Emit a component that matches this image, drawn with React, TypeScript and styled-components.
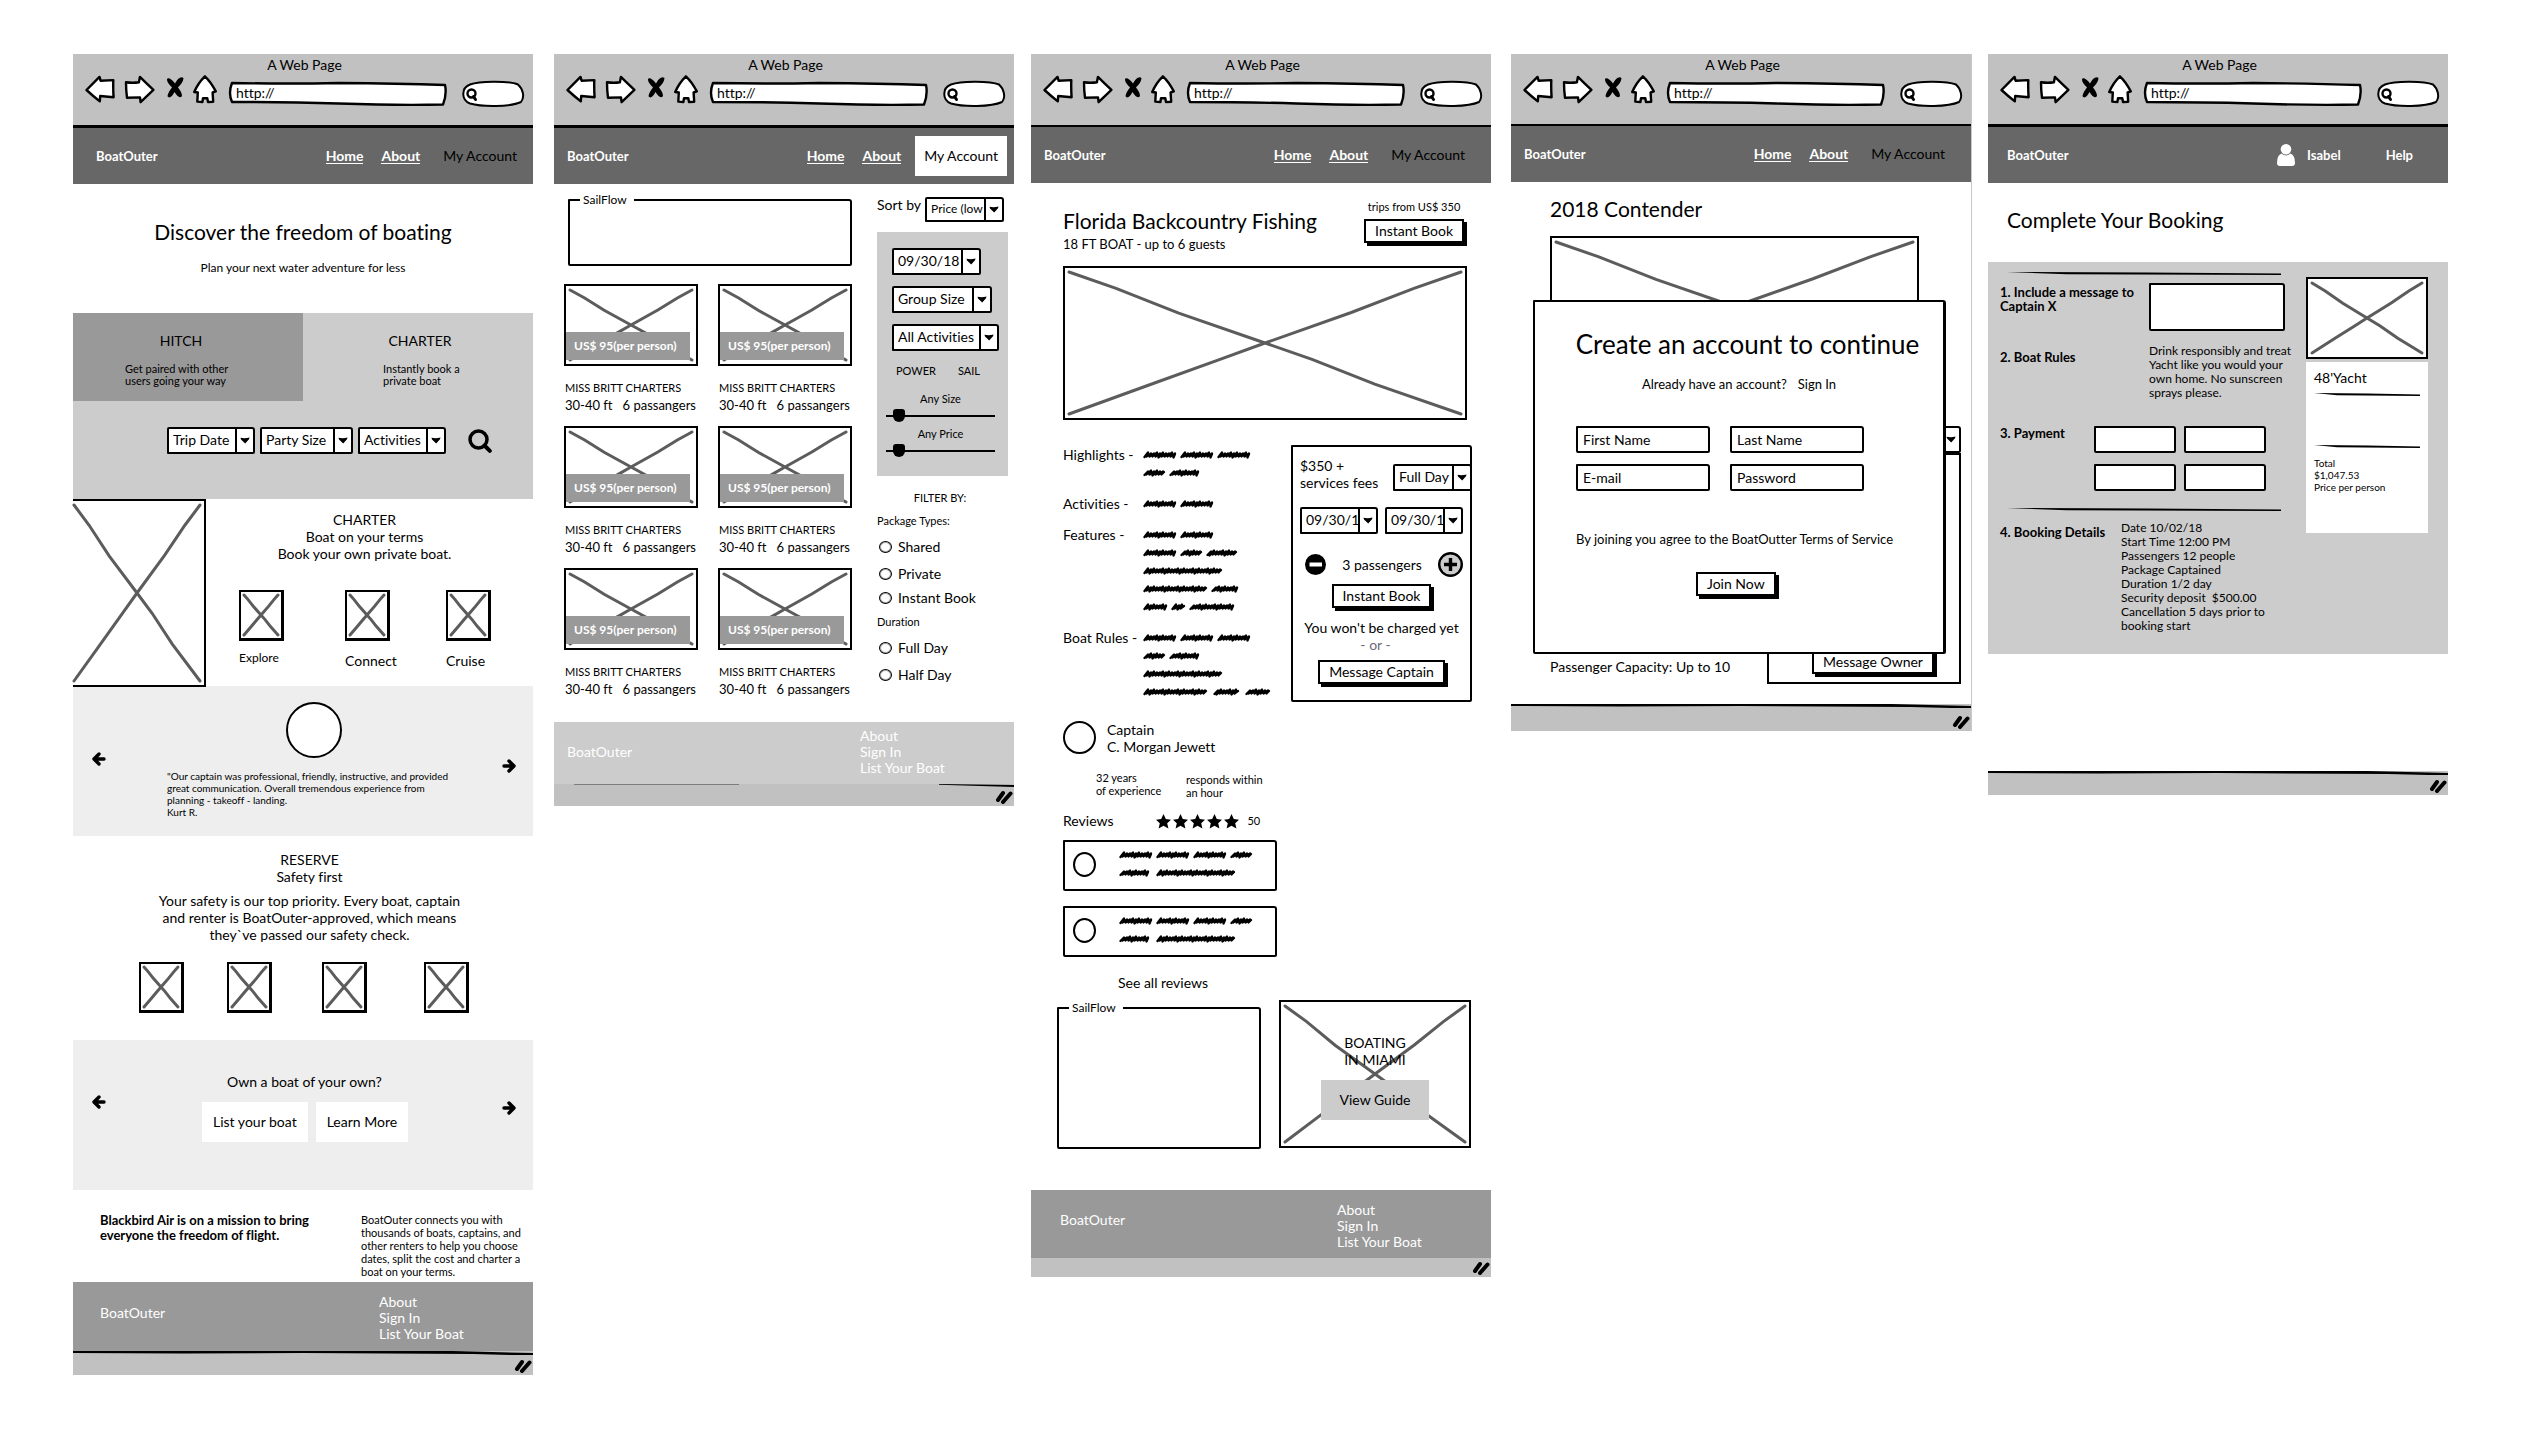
import React from "react";
import styled, { createGlobalStyle, css } from "styled-components";

const INK = "#000";
const DARK = "#676767";
const MID = "#999";
const PANEL = "#ccc";
const PALE = "#eee";
const CHROME = "#c1c1c1";

const GlobalStyle = createGlobalStyle`
  *, *::before, *::after { box-sizing: border-box; }
  body {
    margin: 0;
    background: #fff;
    color: ${INK};
    font-family: Lato, "Open Sans", sans-serif;
    font-size: 14px;
    line-height: 16px;
    font-variant-ligatures: none;
  }
  h1, h2, h3, p, dl, dd, dt, ul, figure, fieldset, blockquote { margin: 0; padding: 0; }
  ul { list-style: none; }
  a { color: inherit; text-decoration: none; }
  button, input, select, textarea { font: inherit; color: inherit; margin: 0; border-radius: 0; }
`;

/* ---------- text ---------- */

const Text = styled.p<{ $size?: number; $lh?: number; $bold?: boolean; $center?: boolean }>`
  font-size: ${(p) => p.$size ?? 14}px;
  line-height: ${(p) => p.$lh ?? 16}px;
  font-weight: ${(p) => (p.$bold ? 700 : 400)};
  text-align: ${(p) => (p.$center ? "center" : "left")};
`;

const Title = styled.h1`
  font-size: 21px;
  line-height: 24px;
  font-weight: 400;
`;

const SmallHeading = styled.h2<{ $lh?: number }>`
  font-size: 14px;
  line-height: ${(p) => p.$lh ?? 16}px;
  font-weight: 400;
`;

/* ---------- page frames ---------- */

const Board = styled.main`
  display: flex;
  align-items: flex-start;
  padding: 54px 79px 0 73px;
`;

const Frame = styled.article<{ $gap?: number; $edge?: boolean }>`
  flex: 1 1 0;
  min-width: 0;
  margin-left: ${(p) => p.$gap ?? 0}px;
  display: flex;
  flex-direction: column;
  background: #fff;
  box-shadow: ${(p) => (p.$edge ? "1px 0 0 #c8c8c8" : "none")};
`;

const ChromeBar = styled.header<{ $line: number; $height: number }>`
  height: ${(p) => p.$height + p.$line}px;
  padding: 3px 9px 0 12px;
  background: ${CHROME};
  border-bottom: ${(p) => p.$line}px solid ${INK};
`;

const ChromeTitle = styled.p`
  text-align: center;
  font-size: 14px;
  line-height: 16px;
`;

const ChromeTools = styled.div`
  display: flex;
  align-items: flex-start;
  margin-top: 2px;
`;

const ToolButton = styled.button<{ $after: number }>`
  display: block;
  flex: none;
  padding: 0;
  border: 0;
  background: none;
  line-height: 0;
  margin-right: ${(p) => p.$after}px;
`;

const AddressField = styled.label`
  position: relative;
  flex: 1;
  height: 23px;
  margin: 7px 15px 0 0;
  min-width: 0;
`;

const PillField = styled.label`
  position: relative;
  flex: none;
  width: 62px;
  height: 25px;
  margin-top: 6px;
`;

const FieldArt = styled.svg`
  position: absolute;
  inset: 0;
  width: 100%;
  height: 100%;
  overflow: visible;
`;

const BareInput = styled.input<{ $indent: number }>`
  position: relative;
  display: block;
  width: 100%;
  height: 21px;
  border: 0;
  background: none;
  padding: 0 4px 0 ${(p) => p.$indent}px;
  outline: none;
`;

const stroke = { stroke: INK, strokeWidth: 2.4, strokeLinejoin: "round" as const, strokeLinecap: "round" as const };

function Chrome({ line = 3, height = 71 }: { line?: number; height?: number }) {
  return (
    <ChromeBar $line={line} $height={height}>
      <ChromeTitle>A Web Page</ChromeTitle>
      <ChromeTools>
        <ToolButton $after={9} aria-label="Back">
          <svg width="30" height="28" fill="#fff" {...stroke}>
            <path d="M1.5 15 14.5 1.9 15.6 5.7 28.3 5.1Q28 14 28.6 22.2L15.2 21 14.8 26.4Q8 21 1.5 15Z" />
          </svg>
        </ToolButton>
        <ToolButton $after={11} aria-label="Forward">
          <svg width="31" height="29" fill="#fff" {...stroke}>
            <path d="M2 7.2Q9 8.2 14.9 7.2L15.9 1.9Q22 8 29.4 14.8L16.6 27.2 16 22.4 3 22.8Q2 15 2 7.2Z" />
          </svg>
        </ToolButton>
        <ToolButton $after={9} aria-label="Stop">
          <svg width="18" height="26" fill={INK}>
            <path d="M1 4C2 2 6 4 9 8.500 12 3 15 1 17.500 3 17 8 14 10 12 12.500 14 15 16 18 16 21 14 24 11 21 8.500 17 6 22 3 24 1.500 21 2 18 4 15 6 12.500 4 10 1 8 1 4Z" />
          </svg>
        </ToolButton>
        <ToolButton $after={12} aria-label="Home">
          <svg width="24" height="29" fill="#fff" {...stroke}>
            <path d="M11.900 1.300Q18 7 22.800 16.400L19.600 17.500 20.200 26.800 15 27 14.300 23.300 10 23.300 9.400 27 4.300 26.600 4.800 17.500 1.200 17Q5 8 11.900 1.300Z" />
          </svg>
        </ToolButton>
        <AddressField>
          <FieldArt viewBox="0 0 219 23" preserveAspectRatio="none" fill="#fff" {...stroke}>
            <path d="M3 1Q60 2 110 1 170 1.500 217 3 219 12 215 22.500 170 23.500 110 21.500 60 20 3 20-1 11 3 1Z" />
          </FieldArt>
          <BareInput $indent={7} aria-label="Address" defaultValue="http://" />
        </AddressField>
        <PillField>
          <FieldArt viewBox="0 0 62 25" fill="#fff" {...stroke} strokeWidth={2}>
            <path d="M8 3.500C18-.5 48 0 56 3.500 61 8 63 16 59 21 48 26 20 26 8 22.500-1 19-1 7 8 3.500Z" />
            <circle cx="9.500" cy="12.500" r="4" strokeWidth={2.400} />
            <path d="M11.500 15.500 13.500 18.500" strokeWidth={3} />
          </FieldArt>
          <BareInput $indent={16} aria-label="Search" />
        </PillField>
      </ChromeTools>
    </ChromeBar>
  );
}

const NavBar = styled.nav<{ $left: number; $right: number }>`
  display: flex;
  align-items: center;
  height: 56px;
  padding: 0 ${(p) => p.$right}px 0 ${(p) => p.$left}px;
  background: ${DARK};
  color: #fff;
`;

const Brand = styled.a`
  margin-right: auto;
  font-size: 13px;
  font-weight: 700;
`;

const NavLink = styled.a<{ $after?: number }>`
  font-size: 14px;
  font-weight: 700;
  line-height: 15px;
  border-bottom: 1px solid #fff;
  margin-right: ${(p) => p.$after ?? 0}px;
`;

const AccountLink = styled.a<{ $boxed?: boolean }>`
  font-size: 14px;
  color: ${INK};
  ${(p) =>
    p.$boxed &&
    css`
      display: flex;
      align-items: center;
      height: 40px;
      padding: 0 9px;
      margin-left: -9px;
      background: #fff;
    `}
`;

function SiteNav({ left, right, boxed }: { left: number; right: number; boxed?: boolean }) {
  return (
    <NavBar $left={left} $right={right}>
      <Brand href="#home">BoatOuter</Brand>
      <NavLink href="#home" $after={18}>Home</NavLink>
      <NavLink href="#about" $after={23}>About</NavLink>
      <AccountLink href="#account" $boxed={boxed}>My Account</AccountLink>
    </NavBar>
  );
}

const UserNavLink = styled.a<{ $after?: number }>`
  display: flex;
  align-items: center;
  gap: 12px;
  font-size: 13px;
  font-weight: 700;
  margin-right: ${(p) => p.$after ?? 0}px;
`;

const FooterBar = styled.footer<{ $tone: string; $height: number; $left: number }>`
  display: grid;
  grid-template-columns: 1fr 154px;
  align-items: start;
  height: ${(p) => p.$height}px;
  padding-left: ${(p) => p.$left}px;
  background: ${(p) => p.$tone};
  color: #fff;
`;

const FooterBrand = styled.a<{ $top: number }>`
  margin-top: ${(p) => p.$top}px;
`;

const FooterLinks = styled.ul<{ $top: number }>`
  margin-top: ${(p) => p.$top}px;
`;

function SiteFooter({ tone = MID, height, left, top }: { tone?: string; height: number; left: number; top: [number, number] }) {
  return (
    <FooterBar $tone={tone} $height={height} $left={left}>
      <FooterBrand href="#home" $top={top[0]}>BoatOuter</FooterBrand>
      <FooterLinks $top={top[1]}>
        <li><a href="#about">About</a></li>
        <li><a href="#signin">Sign In</a></li>
        <li><a href="#list">List Your Boat</a></li>
      </FooterLinks>
    </FooterBar>
  );
}

const StatusBarBox = styled.div<{ $height: number }>`
  position: relative;
  display: flex;
  justify-content: flex-end;
  align-items: flex-end;
  height: ${(p) => p.$height}px;
  padding: 0 1px 2px 0;
  background: ${CHROME};
`;

const StatusLine = styled.svg`
  position: absolute;
  left: 0;
  top: 0;
  width: 100%;
  height: 4px;
`;

function StatusBar({ height, line }: { height: number; line: "full" | "faint" | "none" }) {
  return (
    <StatusBarBox $height={height}>
      {line === "full" && (
        <StatusLine viewBox="0 0 460 4" preserveAspectRatio="none">
          <path d="M0 0H380L460 2V4.500L400 3 230 2 110 2.600 0 2Z" fill={INK} />
        </StatusLine>
      )}
      {line === "faint" && (
        <StatusLine viewBox="0 0 460 4" preserveAspectRatio="none">
          <path d="M20 0H185V.8H20Z" fill="#666" />
          <path d="M385 0 460 1V3L385 .8Z" fill={INK} />
        </StatusLine>
      )}
      <svg width="18" height="14" stroke={INK} strokeWidth="4" strokeLinecap="round">
        <path d="M3 10 8 3M8 12 15.500 3.500" />
      </svg>
    </StatusBarBox>
  );
}

/* ---------- sketch parts ---------- */

const PictureBox = styled.div<{ $w?: string; $h: number; $cut?: boolean; $heavy?: boolean }>`
  position: relative;
  flex: none;
  width: ${(p) => p.$w ?? "100%"};
  height: ${(p) => p.$h}px;
  padding: 4px;
  background: #fff;
  border: 2px solid ${INK};
  ${(p) => p.$heavy && css`border-right-width: 3px; border-bottom-width: 3px; padding: 3px;`}
  ${(p) => p.$cut && css`border-left: 0; padding-left: 1px;`}
`;

const Cross = styled.svg`
  display: block;
  width: 100%;
  height: 100%;
  overflow: visible;
`;

function Picture({ children, ...box }: { $w?: string; $h: number; $cut?: boolean; $heavy?: boolean; children?: React.ReactNode }) {
  return (
    <PictureBox {...box}>
      <Cross viewBox="0 0 100 100" preserveAspectRatio="none" fill="none" stroke="#5c5c5c" strokeWidth="3" strokeLinecap="round" aria-hidden="true">
        <path vectorEffect="non-scaling-stroke" d="M0 0 12 11.500 28 29 50 50 62 61.500 78 79 100 100M100 0 88 11.500 72 28.500 50 50 38 62 22 78 0 100" />
      </Cross>
      {children}
    </PictureBox>
  );
}

const SelectBox = styled.label<{ $w: number; $small?: boolean }>`
  display: flex;
  flex: none;
  width: ${(p) => p.$w}px;
  height: ${(p) => (p.$small ? 25 : 27)}px;
  background: #fff;
  border: 2px solid ${INK};
  border-radius: 2px 3px 2px 1px;
  font-size: ${(p) => (p.$small ? 12 : 14)}px;
`;

const BareSelect = styled.select`
  appearance: none;
  flex: 1;
  min-width: 0;
  border: 0;
  padding: 0 0 1px 4px;
  background: none;
  overflow: hidden;
  text-overflow: clip;
  outline: none;
`;

const ArrowCell = styled.span`
  flex: none;
  display: flex;
  align-items: center;
  justify-content: center;
  width: 18px;
  border-left: 2px solid ${INK};
`;

function Select({ label, w, small }: { label: string; w: number; small?: boolean }) {
  return (
    <SelectBox $w={w} $small={small}>
      <BareSelect aria-label={label}>
        <option>{label}</option>
      </BareSelect>
      <ArrowCell>
        <svg width="10" height="7"><path d="M.5.8Q5 1.600 9.500.6L9 2.200 5.200 6.500 1 2.400Z" fill={INK} /></svg>
      </ArrowCell>
    </SelectBox>
  );
}

const SketchButton = styled.button`
  display: block;
  height: 24px;
  padding: 0 9px 1px;
  background: #fff;
  border: 2px solid ${INK};
  box-shadow: 3px 3px 0 ${INK};
  white-space: nowrap;
`;

const FlatButton = styled.button<{ $tone?: string; $pad: number }>`
  height: 40px;
  padding: 0 ${(p) => p.$pad}px;
  border: 0;
  background: ${(p) => p.$tone ?? "#fff"};
  white-space: nowrap;
`;

const SketchInput = styled.input`
  width: 100%;
  min-width: 0;
  height: 27px;
  padding: 0 5px 1px;
  background: #fff;
  border: 2px solid ${INK};
  border-radius: 1px 3px 2px 2px;
  outline: none;
  &::placeholder { color: ${INK}; opacity: 1; }
`;

const ForecastBox = styled.fieldset<{ $h: number }>`
  min-width: 0;
  height: ${(p) => p.$h}px;
  border: 2px solid ${INK};
  border-radius: 1px 3px 2px 2px;
`;

const ForecastLegend = styled.legend`
  margin-left: 10px;
  padding: 0 7px 0 3px;
  font-size: 12px;
  line-height: 16px;
`;

const Avatar = styled.div<{ $w: number; $h: number }>`
  flex: none;
  width: ${(p) => p.$w}px;
  height: ${(p) => p.$h}px;
  background: #fff;
  border: 2px solid ${INK};
  border-radius: 50%;
`;

const PenLine = styled.svg`
  display: block;
  width: 100%;
  height: 3px;
`;

function Rule() {
  return (
    <PenLine viewBox="0 0 275 3" preserveAspectRatio="none" aria-hidden="true">
      <path d="M0 0 140 .4 275 1.600V3L60 2.200Z" fill={INK} />
    </PenLine>
  );
}

const ScribbleRow = styled.svg`
  display: block;
  height: 18px;
`;

/* Pen strokes that stand in for words; each number is one word's length. */
function Scribble({ words, space = 4 }: { words: number[]; space?: number }) {
  let x = 0;
  const parts: string[] = [];
  words.forEach((w) => {
    const end = x + w;
    let d = `M${x + 1.5} 11`;
    let i = 0;
    for (let p = x + 1; p <= end - 5; p += 3) {
      const beat = (i * 7 + w) % 5;
      d += `L${p + 4} ${beat > 2 ? 6.5 : 7.5}L${p + 2.5} ${beat === 1 ? 11.5 : 10.5}`;
      i += 1;
    }
    d += `L${end - 1} 8`;
    parts.push(d);
    x += w + space;
  });
  return (
    <ScribbleRow width={x} height="18" fill="none" stroke={INK} strokeWidth="2.300" strokeLinecap="round" strokeLinejoin="round" aria-hidden="true">
      <path d={parts.join("")} />
    </ScribbleRow>
  );
}

const ArrowButton = styled.button<{ $top: number }>`
  align-self: start;
  margin-top: ${(p) => p.$top}px;
  width: 14px;
  height: 14px;
  padding: 0;
  border: 0;
  background: none;
  line-height: 0;
`;

function Arrow({ dir, top }: { dir: "left" | "right"; top: number }) {
  return (
    <ArrowButton $top={top} aria-label={dir === "left" ? "Previous" : "Next"}>
      <svg width="14" height="14" fill="none" stroke={INK} strokeWidth="3.400" strokeLinejoin="round" strokeLinecap="round">
        <path d={dir === "left" ? "M7 2 2 7 7 12M2.500 7H12" : "M7 2 12 7 7 12M11.500 7H2"} />
      </svg>
    </ArrowButton>
  );
}

/* ---------- home ---------- */

const Hero = styled.section`
  height: 129px;
  padding-top: 36px;
  display: flex;
  flex-direction: column;
  align-items: center;
  gap: 16px;
`;

const Finder = styled.section`
  background: ${PANEL};
  height: 186px;
`;

const TabPair = styled.div`
  display: grid;
  grid-template-columns: 1fr 1fr;
`;

const Tab = styled.a<{ $active?: boolean; $indent: number }>`
  display: block;
  height: 88px;
  padding-top: 20px;
  background: ${(p) => (p.$active ? MID : "transparent")};
  & > h2 { text-align: center; padding: ${(p) => (p.$active ? "0 14px 0 0" : "0 0 0 4px")}; }
  & > p { margin: 14px 0 0 ${(p) => p.$indent}px; }
`;

const SearchRow = styled.form`
  display: flex;
  align-items: center;
  gap: 5px;
  padding: 26px 0 0 94px;
`;

const SearchButton = styled.button`
  padding: 0;
  margin-left: 17px;
  border: 0;
  background: none;
  line-height: 0;
`;

const CharterRow = styled.section`
  display: flex;
  height: 187px;
`;

const CharterBody = styled.div`
  flex: 1;
  padding-top: 12px;
`;

const CharterText = styled.div`
  padding-right: 10px;
  text-align: center;
`;

const Steps = styled.div`
  display: grid;
  grid-template-columns: 106fr 101fr 87fr;
  padding: 28px 0 0 33px;
`;

const StepLabel = styled.figcaption<{ $small?: boolean }>`
  font-size: ${(p) => (p.$small ? 12 : 14)}px;
  line-height: 16px;
  margin-top: ${(p) => (p.$small ? 9 : 12)}px;
`;

const Carousel = styled.section`
  display: grid;
  grid-template-columns: 75px 1fr 14px;
  height: 150px;
  padding: 0 17px 0 19px;
  background: ${PALE};
`;

const Quote = styled.blockquote`
  padding-top: 16px;
  font-size: 10px;
  line-height: 12px;
  white-space: nowrap;
  & > div { margin: 0 0 12px 119px; }
`;

const OwnerPitch = styled.div`
  padding-top: 34px;
  & > p { margin-left: 60px; }
  & > div { display: flex; gap: 8px; margin: 12px 0 0 35px; }
`;

const Safety = styled.section`
  height: 204px;
  padding: 15px 0 0;
  & > div:first-child { padding-left: 13px; text-align: center; }
`;

const SafetyText = styled(Text)`
  margin-top: 7px;
`;

const SafetyIcons = styled.div`
  display: grid;
  grid-template-columns: 88fr 95fr 102fr 45fr;
  padding: 19px 64px 0 66px;
`;

const Mission = styled.section`
  display: grid;
  grid-template-columns: 261px 1fr;
  height: 92px;
  padding: 23px 0 0 27px;
`;

function HomePage() {
  return (
    <Frame>
      <Chrome />
      <SiteNav left={23} right={16} />
      <Hero>
        <Title>Discover the freedom of boating</Title>
        <Text $size={12}>Plan your next water adventure for less</Text>
      </Hero>
      <Finder>
        <TabPair>
          <Tab href="#hitch" $active $indent={52}>
            <SmallHeading>HITCH</SmallHeading>
            <Text $size={11} $lh={12}>Get paired with other<br />users going your way</Text>
          </Tab>
          <Tab href="#charter" $indent={80}>
            <SmallHeading>CHARTER</SmallHeading>
            <Text $size={11} $lh={12}>Instantly book a<br />private boat</Text>
          </Tab>
        </TabPair>
        <SearchRow>
          <Select label="Trip Date" w={88} />
          <Select label="Party Size" w={93} />
          <Select label="Activities" w={88} />
          <SearchButton type="button" aria-label="Search">
            <svg width="24" height="24" fill="none" stroke={INK} strokeWidth="3.500" strokeLinecap="round">
              <circle cx="10.500" cy="10.500" r="8.500" />
              <path d="M16.500 16.500 21.800 21.800" strokeWidth="4" />
            </svg>
          </SearchButton>
        </SearchRow>
      </Finder>
      <CharterRow>
        <Picture $w="133px" $h={188} $cut />
        <CharterBody>
          <CharterText>
            <SmallHeading $lh={17}>CHARTER</SmallHeading>
            <Text $lh={17} $center>Boat on your terms</Text>
            <Text $lh={17} $center>Book your own private boat.</Text>
          </CharterText>
          <Steps>
            {["Explore", "Connect", "Cruise"].map((s, i) => (
              <figure key={s}>
                <Picture $w="45px" $h={51} $heavy />
                <StepLabel $small={i === 0}>{s}</StepLabel>
              </figure>
            ))}
          </Steps>
        </CharterBody>
      </CharterRow>
      <Carousel>
        <Arrow dir="left" top={66} />
        <Quote>
          <Avatar $w={56} $h={56} />
          "Our captain was professional, friendly, instructive, and provided<br />
          great communication. Overall tremendous experience from<br />
          planning - takeoff - landing.<br />
          Kurt R.
        </Quote>
        <Arrow dir="right" top={73} />
      </Carousel>
      <Safety>
        <div>
          <SmallHeading $lh={17}>RESERVE</SmallHeading>
          <Text $lh={17} $center>Safety first</Text>
          <SafetyText $lh={17} $center>
            Your safety is our top priority. Every boat, captain<br />
            and renter is BoatOuter-approved, which means<br />
            they`ve passed our safety check.
          </SafetyText>
        </div>
        <SafetyIcons>
          {[0, 1, 2, 3].map((i) => <Picture key={i} $w="45px" $h={51} $heavy />)}
        </SafetyIcons>
      </Safety>
      <Carousel>
        <Arrow dir="left" top={55} />
        <OwnerPitch>
          <Text>Own a boat of your own?</Text>
          <div>
            <FlatButton $pad={11}>List your boat</FlatButton>
            <FlatButton $pad={11}>Learn More</FlatButton>
          </div>
        </OwnerPitch>
        <Arrow dir="right" top={61} />
      </Carousel>
      <Mission>
        <Text $size={13} $lh={15} $bold>Blackbird Air is on a mission to bring<br />everyone the freedom of flight.</Text>
        <Text $size={11} $lh={13}>
          BoatOuter connects you with<br />thousands of boats, captains, and<br />other renters to help you choose<br />
          dates, split the cost and charter a<br />boat on your terms.
        </Text>
      </Mission>
      <SiteFooter height={69} left={27} top={[23, 12]} />
      <StatusBar height={24} line="full" />
    </Frame>
  );
}

/* ---------- search results ---------- */

const Results = styled.div`
  display: grid;
  grid-template-columns: 288px 1fr;
  column-gap: 25px;
  height: 538px;
  padding: 8px 6px 0 10px;
`;

const ResultsForecast = styled.div`
  padding-left: 4px;
`;

const Cards = styled.div`
  display: grid;
  grid-template-columns: 134px 134px;
  gap: 12px 20px;
  padding-top: 18px;
`;

const PriceTag = styled.span`
  position: absolute;
  left: 0;
  bottom: 4px;
  width: 124px;
  height: 28px;
  padding: 0 8px;
  background: ${MID};
  color: #fff;
  font-size: 12px;
  font-weight: 700;
  line-height: 28px;
`;

const CardCaption = styled.div`
  padding: 14px 0 0 1px;
  white-space: pre;
`;

const SortRow = styled.div`
  display: flex;
  gap: 4px;
  padding-top: 5px;
  white-space: nowrap;
`;

const FilterPanel = styled.div`
  height: 244px;
  margin-top: 10px;
  padding: 16px 9px 0 15px;
  background: ${PANEL};
`;

const FilterSelects = styled.div`
  display: flex;
  flex-direction: column;
  gap: 11px;
`;

const BoatKinds = styled.div`
  display: flex;
  gap: 22px;
  padding: 12px 0 0 4px;
  font-size: 11px;
`;

const SliderField = styled.label<{ $top: number }>`
  display: block;
  margin: ${(p) => p.$top}px 4px 0 -6px;
  font-size: 11px;
  line-height: 16px;
  text-align: center;
`;

const Slider = styled.input`
  appearance: none;
  display: block;
  width: 100%;
  height: 13px;
  margin: 2px 0 0;
  background: linear-gradient(${INK}, ${INK}) center / 100% 2px no-repeat;
  &::-webkit-slider-thumb {
    appearance: none;
    width: 12px;
    height: 13px;
    background: ${INK};
    border-radius: 3px 3px 6px 6px;
  }
`;

const FilterHeading = styled.h3<{ $center?: boolean; $top: number }>`
  margin-top: ${(p) => p.$top}px;
  padding-right: ${(p) => (p.$center ? 5 : 0)}px;
  font-size: 11px;
  line-height: 16px;
  font-weight: 400;
  text-align: ${(p) => (p.$center ? "center" : "left")};
`;

const RadioLabel = styled.label<{ $top: number }>`
  display: flex;
  align-items: center;
  gap: 6px;
  margin: ${(p) => p.$top}px 0 0 2px;
`;

const Radio = styled.input`
  appearance: none;
  width: 13px;
  height: 12px;
  border: 1px solid ${INK};
  outline: 1px solid rgba(0, 0, 0, 0.35);
  outline-offset: -2px;
  border-radius: 50% !important;
`;

function ResultsPage() {
  return (
    <Frame $gap={21}>
      <Chrome />
      <SiteNav left={13} right={7} boxed />
      <Results>
        <div>
          <ResultsForecast>
            <ForecastBox $h={74}><ForecastLegend>SailFlow</ForecastLegend></ForecastBox>
          </ResultsForecast>
          <Cards>
            {[0, 1, 2, 3, 4, 5].map((i) => (
              <div key={i}>
                <Picture $h={82}><PriceTag>US$ 95(per person)</PriceTag></Picture>
                <CardCaption>
                  <Text $size={11} $lh={16}>MISS BRITT CHARTERS</Text>
                  <Text $size={13} $lh={18}>{"30-40 ft   6 passangers"}</Text>
                </CardCaption>
              </div>
            ))}
          </Cards>
        </div>
        <div>
          <SortRow>
            <Text>Sort by</Text>
            <Select label="Price (low" w={79} small />
          </SortRow>
          <FilterPanel>
            <FilterSelects>
              <Select label="09/30/18" w={89} />
              <Select label="Group Size" w={100} />
              <Select label="All Activities" w={107} />
            </FilterSelects>
            <BoatKinds><span>POWER</span><span>SAIL</span></BoatKinds>
            <SliderField $top={12}>Any Size<Slider type="range" defaultValue={7} /></SliderField>
            <SliderField $top={4}>Any Price<Slider type="range" defaultValue={7} /></SliderField>
          </FilterPanel>
          <FilterHeading $center $top={14}>FILTER BY:</FilterHeading>
          <FilterHeading $top={7}>Package Types:</FilterHeading>
          <RadioLabel $top={10}><Radio type="radio" name="package" />Shared</RadioLabel>
          <RadioLabel $top={11}><Radio type="radio" name="package" />Private</RadioLabel>
          <RadioLabel $top={8}><Radio type="radio" name="package" />Instant Book</RadioLabel>
          <FilterHeading $top={8}>Duration</FilterHeading>
          <RadioLabel $top={10}><Radio type="radio" name="duration" />Full Day</RadioLabel>
          <RadioLabel $top={11}><Radio type="radio" name="duration" />Half Day</RadioLabel>
        </div>
      </Results>
      <SiteFooter tone={PANEL} height={62} left={13} top={[22, 6]} />
      <StatusBar height={22} line="faint" />
    </Frame>
  );
}

/* ---------- boat details ---------- */

const Details = styled.div`
  height: 1007px;
  padding: 16px 19px 0 32px;
`;

const DetailsHead = styled.div`
  display: flex;
  justify-content: space-between;
  padding: 0 8px 0 0;
`;

const DetailsTitle = styled.div`
  padding-top: 10px;
`;

const DetailsBook = styled.div`
  display: flex;
  flex-direction: column;
  align-items: center;
  gap: 4px;
  white-space: nowrap;
`;

const DetailsPicture = styled.div`
  padding: 11px 5px 0 0;
`;

const DetailsMain = styled.div`
  display: grid;
  grid-template-columns: 1fr 181px;
  align-items: start;
  margin-top: 25px;
`;

const Specs = styled.dl`
  display: grid;
  grid-template-columns: 80px 1fr;
  row-gap: 13px;
  padding-top: 1px;
  & > dt { line-height: 18px; white-space: nowrap; }
`;

const BookingCard = styled.div`
  height: 257px;
  padding: 10px 7px 0 7px;
  border: 2px solid ${INK};
  border-radius: 1px 3px 2px 2px;
`;

const PriceRow = styled.div`
  display: flex;
  justify-content: space-between;
  align-items: flex-start;
  margin-right: -9px;
  white-space: nowrap;
  & > label { margin-top: 7px; }
`;

const DateRow = styled.div`
  display: flex;
  justify-content: space-between;
  margin-top: 16px;
`;

const PassengerRow = styled.div`
  display: flex;
  align-items: center;
  justify-content: space-between;
  margin: 18px 0 0 5px;
`;

const RoundButton = styled.button`
  padding: 0;
  border: 0;
  background: none;
  line-height: 0;
`;

const BookingActions = styled.div`
  display: flex;
  flex-direction: column;
  align-items: center;
  padding-top: 7px;
  & > p:nth-of-type(1) { margin-top: 12px; }
  & > p:nth-of-type(2) { margin: 1px 12px 7px 0; color: #6b6b7b; }
`;

const CaptainRow = styled.div`
  display: flex;
  gap: 11px;
  margin-top: 19px;
`;

const CaptainFacts = styled.div`
  display: flex;
  gap: 25px;
  padding: 16px 0 0 33px;
  & > p { width: 65px; white-space: nowrap; }
  & > p:last-child { margin-top: 2px; }
`;

const ReviewsHead = styled.div`
  display: flex;
  align-items: center;
  margin-top: 14px;
  & > svg { margin: 0 7px 0 42px; }
`;

const ReviewCard = styled.div<{ $top: number }>`
  display: flex;
  align-items: center;
  gap: 23px;
  width: 214px;
  height: 51px;
  margin-top: ${(p) => p.$top}px;
  padding: 0 0 3px 8px;
  border: 2px solid ${INK};
  border-radius: 1px 3px 2px 2px;
`;

const AllReviews = styled.a`
  display: block;
  width: 200px;
  margin-top: 18px;
  text-align: center;
`;

const GuideRow = styled.div`
  display: grid;
  grid-template-columns: 204px 192px;
  justify-content: space-between;
  margin: 9px 1px 0 -6px;
`;

const GuideOverlay = styled.div`
  position: absolute;
  inset: 32px 0 0;
  display: flex;
  flex-direction: column;
  align-items: center;
  gap: 12px;
`;

const STAR = "M8.500 1 10.800 6 16 6.700 12.200 10.200 13.400 15.600 8.500 12.800 3.600 15.600 4.800 10.200 1 6.700 6.200 6Z";

function DetailsPage() {
  return (
    <Frame $gap={17}>
      <Chrome line={2} />
      <SiteNav left={13} right={26} />
      <Details>
        <DetailsHead>
          <DetailsTitle>
            <Title>Florida Backcountry Fishing</Title>
            <Text $size={13} $lh={22}>18 FT BOAT - up to 6 guests</Text>
          </DetailsTitle>
          <DetailsBook>
            <Text $size={11}>trips from US$ 350</Text>
            <SketchButton>Instant Book</SketchButton>
          </DetailsBook>
        </DetailsHead>
        <DetailsPicture><Picture $h={154} /></DetailsPicture>
        <DetailsMain>
          <Specs>
            <dt>Highlights -</dt>
            <dd><Scribble words={[33, 33, 33]} /><Scribble words={[22, 30]} /></dd>
            <dt>Activities -</dt>
            <dd><Scribble words={[33, 33]} /></dd>
            <dt>Features -</dt>
            <dd>
              <Scribble words={[33, 33]} /><Scribble words={[33, 22, 31]} /><Scribble words={[79]} />
              <Scribble words={[64, 27]} /><Scribble words={[24, 14, 45]} />
            </dd>
            <dt>Boat Rules -</dt>
            <dd>
              <Scribble words={[33, 33, 33]} /><Scribble words={[22, 30]} /><Scribble words={[79]} />
              <Scribble words={[64, 26, 25]} space={6} />
            </dd>
          </Specs>
          <BookingCard>
            <PriceRow>
              <Text $lh={17}>$350 +<br />services fees</Text>
              <Select label="Full Day" w={79} />
            </PriceRow>
            <DateRow>
              <Select label="09/30/18" w={78} />
              <Select label="09/30/18" w={78} />
            </DateRow>
            <PassengerRow>
              <RoundButton aria-label="Fewer passengers">
                <svg width="21" height="21"><circle cx="10.500" cy="10.500" r="10.500" /><path d="M4.500 8.500H17V12.500H4.500Z" fill="#fff" /></svg>
              </RoundButton>
              <Text>3 passengers</Text>
              <RoundButton aria-label="More passengers">
                <svg width="25" height="25" stroke={INK}><circle cx="12.500" cy="12.500" r="11.300" fill={PANEL} strokeWidth="2.400" /><path d="M12.500 6V19M6 12.500H19" strokeWidth="3.400" /></svg>
              </RoundButton>
            </PassengerRow>
            <BookingActions>
              <SketchButton>Instant Book</SketchButton>
              <Text>You won't be charged yet</Text>
              <Text>- or -</Text>
              <SketchButton>Message Captain</SketchButton>
            </BookingActions>
          </BookingCard>
        </DetailsMain>
        <CaptainRow>
          <Avatar $w={33} $h={33} />
          <Text $lh={17}>Captain<br />C. Morgan Jewett</Text>
        </CaptainRow>
        <CaptainFacts>
          <Text $size={11} $lh={13}>32 years<br />of experience</Text>
          <Text $size={11} $lh={13}>responds within<br />an hour</Text>
        </CaptainFacts>
        <ReviewsHead>
          <Text>Reviews</Text>
          <svg width="85" height="16" role="img" aria-label="5 stars">
            {[0, 17, 34, 51, 68].map((x) => <path key={x} d={STAR} transform={`translate(${x})`} />)}
          </svg>
          <Text $size={11}>50</Text>
        </ReviewsHead>
        {[11, 15].map((top) => (
          <ReviewCard key={top} $top={top}>
            <Avatar $w={23} $h={25} />
            <div>
              <Scribble words={[33, 33, 33, 22]} />
              <Scribble words={[30, 79]} space={7} />
            </div>
          </ReviewCard>
        ))}
        <AllReviews href="#reviews">See all reviews</AllReviews>
        <GuideRow>
          <ForecastBox $h={149}><ForecastLegend>SailFlow</ForecastLegend></ForecastBox>
          <Picture $h={148}>
            <GuideOverlay>
              <Text $lh={17}>BOATING<br />IN MIAMI</Text>
              <FlatButton $tone={PANEL} $pad={19}>View Guide</FlatButton>
            </GuideOverlay>
          </Picture>
        </GuideRow>
      </Details>
      <SiteFooter height={68} left={29} top={[22, 12]} />
      <StatusBar height={19} line="none" />
    </Frame>
  );
}

/* ---------- sign up ---------- */

const SignUpBody = styled.div`
  position: relative;
  height: 522px;
  padding: 15px 10px 0 39px;
`;

const BoatPicture = styled.div`
  padding: 15px 42px 0 0;
`;

const BoatInfo = styled.div`
  display: grid;
  grid-template-columns: 1fr 194px;
  align-items: end;
  margin-top: 49px;
`;

const BoatFacts = styled.div`
  padding-bottom: 9px;
  white-space: nowrap;
`;

const OwnerCard = styled.div`
  display: flex;
  justify-content: center;
  align-items: flex-end;
  height: 231px;
  padding: 0 0 8px 18px;
  border: 2px solid ${INK};
`;

const OwnerColumn = styled.div`
  display: flex;
  flex-direction: column;
  & > label { align-self: flex-end; }
`;

const Modal = styled.section`
  position: absolute;
  left: 22px;
  right: 25px;
  top: 118px;
  height: 354px;
  padding: 28px 0 0;
  background: #fff;
  border: 2px solid ${INK};
  border-right-width: 3px;
  border-radius: 1px 3px 2px 2px;
`;

const ModalTitle = styled.h2`
  padding-left: 17px;
  font-size: 26px;
  line-height: 28px;
  font-weight: 400;
  text-align: center;
  white-space: nowrap;
`;

const SignInLine = styled.p`
  display: flex;
  justify-content: center;
  gap: 11px;
  margin-top: 18px;
  font-size: 13px;
`;

const SignUpFields = styled.form`
  display: grid;
  grid-template-columns: 134px 134px;
  gap: 11px 20px;
  padding: 34px 0 0 41px;
`;

const Terms = styled.p`
  padding: 40px 0 0 41px;
  font-size: 13px;
  white-space: nowrap;
`;

const JoinRow = styled.div`
  padding: 25px 0 0 161px;
`;

function SignUpPage() {
  return (
    <Frame $gap={20} $edge>
      <Chrome line={2} height={70} />
      <SiteNav left={13} right={26} />
      <SignUpBody>
        <Title>2018 Contender</Title>
        <BoatPicture><Picture $h={141} /></BoatPicture>
        <BoatInfo>
          <BoatFacts>
            <Text $lh={17}>Passenger Capacity: Up to 10</Text>
          </BoatFacts>
          <OwnerColumn>
            <Select label="Full Day" w={79} />
            <OwnerCard><SketchButton>Message Owner</SketchButton></OwnerCard>
          </OwnerColumn>
        </BoatInfo>
        <Modal role="dialog" aria-labelledby="signup-title">
          <ModalTitle id="signup-title">Create an account to continue</ModalTitle>
          <SignInLine><span>Already have an account?</span><a href="#signin">Sign In</a></SignInLine>
          <SignUpFields>
            <SketchInput aria-label="First Name" placeholder="First Name" />
            <SketchInput aria-label="Last Name" placeholder="Last Name" />
            <SketchInput aria-label="E-mail" type="email" placeholder="E-mail" />
            <SketchInput aria-label="Password" type="password" placeholder="Password" />
          </SignUpFields>
          <Terms>By joining you agree to the BoatOutter Terms of Service</Terms>
          <JoinRow><SketchButton>Join Now</SketchButton></JoinRow>
        </Modal>
      </SignUpBody>
      <StatusBar height={27} line="full" />
    </Frame>
  );
}

/* ---------- booking ---------- */

const BookingHead = styled.div`
  height: 79px;
  padding: 25px 0 0 19px;
`;

const BookingPanel = styled.div`
  display: grid;
  grid-template-columns: 285px 122px;
  justify-content: space-between;
  height: 392px;
  margin-bottom: 117px;
  padding: 10px 20px 0 12px;
  background: ${PANEL};
`;

const RuleWrap = styled.div<{ $top?: number }>`
  margin-top: ${(p) => p.$top ?? 0}px;
  padding: 0 4px 0 7px;
`;

const FormRow = styled.div<{ $label: number; $top: number; $height: number }>`
  display: grid;
  grid-template-columns: ${(p) => p.$label}px 1fr;
  align-items: start;
  height: ${(p) => p.$height}px;
  margin-top: ${(p) => p.$top}px;
  white-space: nowrap;
`;

const StepTitle = styled.label<{ $top: number }>`
  display: block;
  margin-top: ${(p) => p.$top}px;
  font-size: 13px;
  line-height: 14px;
  font-weight: 700;
`;

const MessageBox = styled.textarea`
  width: 100%;
  height: 48px;
  padding: 4px;
  border: 2px solid ${INK};
  border-radius: 1px 3px 2px 2px;
  background: #fff;
  resize: none;
  outline: none;
`;

const PaymentFields = styled.div`
  display: grid;
  grid-template-columns: 82px 82px;
  gap: 11px 8px;
`;

const YachtCard = styled.div`
  height: 171px;
  margin-top: 3px;
  padding: 8px 8px 0 8px;
  background: #fff;
  & > svg { margin-top: 7px; }
  & > svg + svg { margin-top: 49px; }
  & > p:last-child { margin-top: 9px; }
`;

const Summary = styled.div`
  padding-top: 5px;
`;

function BookingPage() {
  return (
    <Frame $gap={17}>
      <Chrome height={70} />
      <NavBar $left={19} $right={35}>
        <Brand href="#home">BoatOuter</Brand>
        <UserNavLink href="#profile" $after={45}>
          <svg width="18" height="22" fill="#fff">
            <circle cx="9" cy="5.300" r="5.300" />
            <path d="M4.500 9.500Q9 13.500 13.500 9.500 18 11 18 19 18 22 15 22H3Q0 22 0 19 0 11 4.500 9.500Z" />
          </svg>
          Isabel
        </UserNavLink>
        <UserNavLink href="#help">Help</UserNavLink>
      </NavBar>
      <BookingHead><Title>Complete Your Booking</Title></BookingHead>
      <BookingPanel>
        <div>
          <RuleWrap><Rule /></RuleWrap>
          <FormRow $label={149} $top={8} $height={60}>
            <StepTitle htmlFor="message" $top={2}>1. Include a message to<br />Captain X</StepTitle>
            <MessageBox id="message" />
          </FormRow>
          <FormRow $label={149} $top={1} $height={72}>
            <StepTitle as="h2" $top={6}>2. Boat Rules</StepTitle>
            <Text $size={12} $lh={14}>Drink responsibly and treat<br />Yacht like you would your<br />own home. No sunscreen<br />sprays please.</Text>
          </FormRow>
          <FormRow $label={94} $top={10} $height={65}>
            <StepTitle as="h2" $top={0}>3. Payment</StepTitle>
            <PaymentFields>
              <SketchInput aria-label="Card number" />
              <SketchInput aria-label="Name on card" />
              <SketchInput aria-label="Expiry date" />
              <SketchInput aria-label="Security code" />
            </PaymentFields>
          </FormRow>
          <RuleWrap $top={17}><Rule /></RuleWrap>
          <FormRow $label={121} $top={10} $height={112}>
            <StepTitle as="h2" $top={4}>4. Booking Details</StepTitle>
            <Text $size={12} $lh={14}>
              Date 10/02/18<br />Start Time 12:00 PM<br />Passengers 12 people<br />Package Captained<br />
              Duration 1/2 day<br />Security deposit&nbsp; $500.00<br />Cancellation 5 days prior to<br />booking start
            </Text>
          </FormRow>
        </div>
        <Summary>
          <Picture $h={82} />
          <YachtCard>
            <Text>48'Yacht</Text>
            <Rule />
            <Rule />
            <Text $size={10} $lh={12}>Total<br />$1,047.53<br />Price per person</Text>
          </YachtCard>
        </Summary>
      </BookingPanel>
      <StatusBar height={24} line="full" />
    </Frame>
  );
}

export default function App() {
  return (
    <>
      <GlobalStyle />
      <Board>
        <HomePage />
        <ResultsPage />
        <DetailsPage />
        <SignUpPage />
        <BookingPage />
      </Board>
    </>
  );
}
